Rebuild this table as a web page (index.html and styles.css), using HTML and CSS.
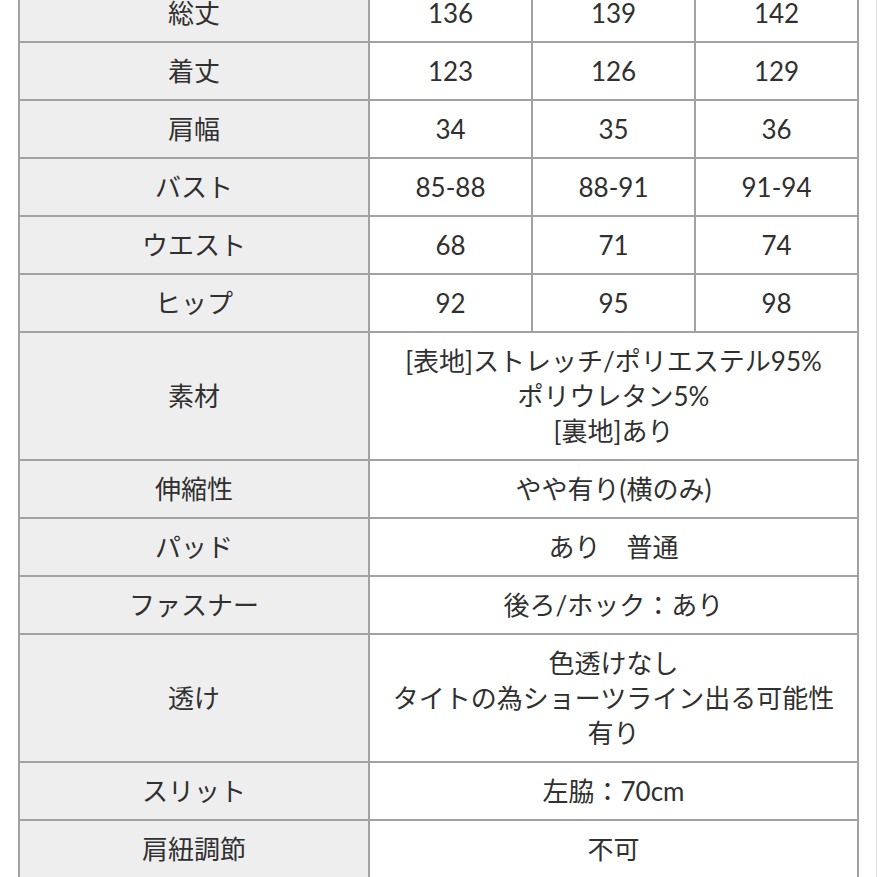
FILE: index.html
```html
<!DOCTYPE html>
<html lang="ja">
<head>
<meta charset="utf-8">
<title>サイズ表</title>
<link rel="stylesheet" href="styles.css">
</head>
<body>
<div class="page">
<table class="spec">
  <colgroup>
    <col class="c-label"><col class="c-val"><col class="c-val"><col class="c-val">
  </colgroup>
  <tr><th>総丈</th><td>136</td><td>139</td><td>142</td></tr>
  <tr><th>着丈</th><td>123</td><td>126</td><td>129</td></tr>
  <tr><th>肩幅</th><td>34</td><td>35</td><td>36</td></tr>
  <tr><th>バスト</th><td>85-88</td><td>88-91</td><td>91-94</td></tr>
  <tr><th>ウエスト</th><td>68</td><td>71</td><td>74</td></tr>
  <tr><th>ヒップ</th><td>92</td><td>95</td><td>98</td></tr>
  <tr class="tall"><th>素材</th><td colspan="3">[表地]ストレッチ/ポリエステル95%<br>ポリウレタン5%<br>[裏地]あり</td></tr>
  <tr><th>伸縮性</th><td colspan="3">やや有り(横のみ)</td></tr>
  <tr><th>パッド</th><td colspan="3">あり　普通</td></tr>
  <tr><th>ファスナー</th><td colspan="3">後ろ/ホック：あり</td></tr>
  <tr class="tall"><th>透け</th><td colspan="3">色透けなし<br>タイトの為ショーツライン出る可能性<br>有り</td></tr>
  <tr><th>スリット</th><td colspan="3">左脇：70cm</td></tr>
  <tr><th>肩紐調節</th><td colspan="3">不可</td></tr>
</table>
</div>
</body>
</html>
```
FILE: styles.css
```css
html, body {
  margin: 0;
  padding: 0;
  background: #ffffff;
}
body {
  font-family: "Lato", "Noto Sans CJK JP", sans-serif;
  color: #303030;
  overflow: hidden;
}
.page {
  width: 877px;
  height: 877px;
  box-sizing: border-box;
  border-right: 1px solid #e2e2e2;
  overflow: hidden;
}
.spec {
  border-collapse: collapse;
  table-layout: fixed;
  width: 841px;
  margin: -17px 0 0 18px;
  font-size: 26px;
  line-height: 35px;
}
.c-label { width: 350px; }
.c-val { width: 163px; }
.spec th, .spec td {
  border: 2px solid #a2a2a2;
  height: 58px;
  padding: 0;
  text-align: center;
  vertical-align: middle;
  font-weight: 400;
  box-sizing: border-box;
}
.spec th {
  background: #eeeeee;
}
.spec td {
  background: #ffffff;
}
.spec tr.tall th, .spec tr.tall td {
  height: 128px;
}
```
